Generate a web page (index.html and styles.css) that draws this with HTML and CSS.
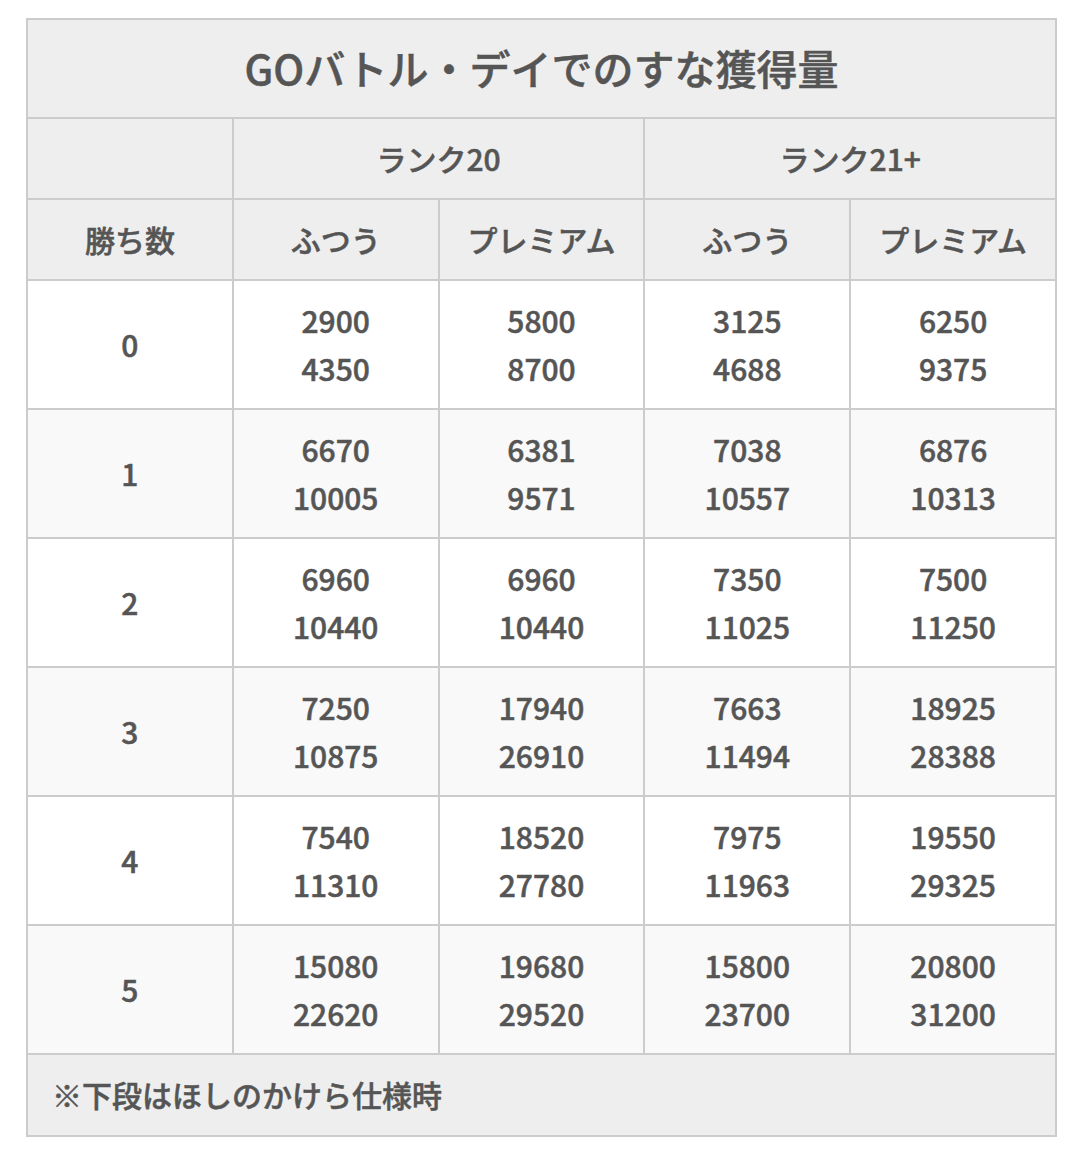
FILE: index.html
```html
<!DOCTYPE html>
<html lang="ja">
<head>
<meta charset="utf-8">
<link rel="stylesheet" href="styles.css">
</head>
<body>
<table class="tbl">
  <thead>
    <tr><th class="title" colspan="5">GOバトル・デイでのすな獲得量</th></tr>
    <tr class="hrow"><th></th><th colspan="2">ランク20</th><th colspan="2">ランク21+</th></tr>
    <tr class="hrow"><th>勝ち数</th><th>ふつう</th><th>プレミアム</th><th>ふつう</th><th>プレミアム</th></tr>
  </thead>
  <tbody>
    <tr><td>0</td><td>2900<br>4350</td><td>5800<br>8700</td><td>3125<br>4688</td><td>6250<br>9375</td></tr>
    <tr class="alt"><td>1</td><td>6670<br>10005</td><td>6381<br>9571</td><td>7038<br>10557</td><td>6876<br>10313</td></tr>
    <tr><td>2</td><td>6960<br>10440</td><td>6960<br>10440</td><td>7350<br>11025</td><td>7500<br>11250</td></tr>
    <tr class="alt"><td>3</td><td>7250<br>10875</td><td>17940<br>26910</td><td>7663<br>11494</td><td>18925<br>28388</td></tr>
    <tr><td>4</td><td>7540<br>11310</td><td>18520<br>27780</td><td>7975<br>11963</td><td>19550<br>29325</td></tr>
    <tr class="alt"><td>5</td><td>15080<br>22620</td><td>19680<br>29520</td><td>15800<br>23700</td><td>20800<br>31200</td></tr>
  </tbody>
  <tfoot>
    <tr><td class="note" colspan="5">※下段はほしのかけら仕様時</td></tr>
  </tfoot>
</table>
</body>
</html>
```
FILE: styles.css
```css
html, body {
  margin: 0;
  padding: 0;
  background: #fff;
}
body {
  padding: 18px 0 0 26px;
  font-family: "Noto Sans CJK JP", "Noto Sans", sans-serif;
  color: #555;
}
.tbl {
  border-collapse: collapse;
  width: 1031px;
  table-layout: fixed;
  border: 2px solid #ccc;
}
.tbl th, .tbl td {
  border: 2px solid #ccc;
  text-align: center;
  vertical-align: middle;
  font-size: 30px;
  font-weight: 500;
  -webkit-text-stroke: 0.5px #555;
  padding: 0;
}
.tbl th {
  background: #eee;
}
.title {
  font-size: 41px !important;
  height: 94px;
  line-height: 41px;
  padding-bottom: 3px !important;
}
.hrow th {
  height: 77px;
  line-height: 30px;
  padding-bottom: 2px !important;
}
.tbl tbody td {
  height: 125px;
  line-height: 48px;
  padding-bottom: 2px;
}
.tbl tbody tr.alt td {
  background: #f9f9f9;
}
.tbl tfoot td.note {
  background: #eee;
  text-align: left;
  padding-left: 24px;
  padding-bottom: 2px;
  height: 78px;
  line-height: 30px;
}
```
